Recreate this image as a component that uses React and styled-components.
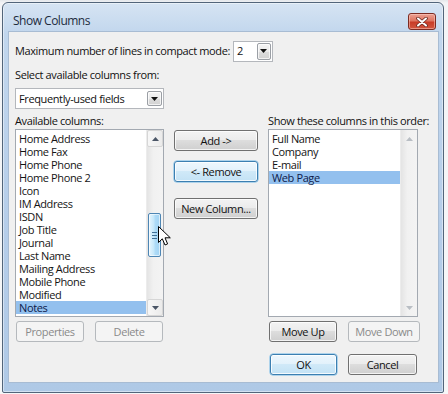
import React from "react";
import styled, { createGlobalStyle, css } from "styled-components";

const GlobalStyle = createGlobalStyle`
  html, body { margin: 0; padding: 0; background: #eef0f3; }
  body {
    font-family: "Open Sans", "Noto Sans", sans-serif;
    font-size: 11px;
    letter-spacing: -0.38px;
    color: #111;
  }
  * { box-sizing: border-box; }
`;

const Page = styled.div`
  position: relative;
  width: 448px;
  height: 394px;
  padding: 2px 0 0 2px;
  overflow: hidden;
  background: linear-gradient(#e4e7eb 0, #f3f4f6 3px, #f6f7f8 100%);
`;

const Window = styled.div`
  width: 442px;
  height: 391px;
  border: 1px solid #52657a;
  border-radius: 6px 6px 2px 2px;
  background: linear-gradient(#d6e4f3 0%, #c1d6ed 8%, #b5cde9 60%, #afc9e6 100%);
  box-shadow: inset 0 0 0 1px rgba(255, 255, 255, 0.45);
  display: flex;
  flex-direction: column;
  padding: 0 5px 10px 6px;
`;

const TitleBar = styled.div`
  height: 29px;
  display: flex;
  align-items: flex-start;
  justify-content: space-between;
  padding: 10px 2px 0 4px;
`;

const Title = styled.div`
  line-height: 16px;
  font-size: 12px;
  letter-spacing: -0.5px;
  color: #1d2b3d;
`;

const CloseButton = styled.div`
  width: 28px;
  height: 17px;
  border: 1px solid #7c2b22;
  border-radius: 3px;
  background: linear-gradient(#eca193 0%, #de7561 45%, #c83c28 55%, #d2563f 100%);
  box-shadow: inset 0 0 0 1px rgba(255, 210, 200, 0.5);
  display: flex;
  align-items: center;
  justify-content: center;
`;

const Client = styled.div`
  flex: 1;
  background: #f0f0f0;
  box-shadow: 0 0 0 1px #a8bcd3;
  padding: 8px 0 7px 6px;
  display: flex;
  flex-direction: column;
`;

const Row = styled.div`
  display: flex;
  align-items: center;
  gap: 3px;
  height: 22px;
`;

const Label = styled.div`
  line-height: 16px;
  white-space: nowrap;
  margin-top: ${(p) => p.$mt || 0}px;
`;

const Combo = styled.div`
  width: ${(p) => p.$w}px;
  height: 21px;
  margin-top: ${(p) => p.$mt || 0}px;
  background: #fff;
  border: 1px solid #b4b7bc;
  display: flex;
  align-items: center;
  padding: 1px 1px 1px 3px;
`;

const ComboText = styled.div`
  flex: 1;
  line-height: 16px;
  white-space: nowrap;
`;

const DropButton = styled.div`
  width: ${(p) => p.$w}px;
  height: ${(p) => p.$h}px;
  border: 1px solid #9b9fa5;
  border-radius: 2px;
  background: linear-gradient(#f4f4f4 0%, #eaeaea 50%, #dcdcdc 51%, #d2d2d2 100%);
  box-shadow: inset 0 0 0 1px rgba(255, 255, 255, 0.7);
  display: flex;
  align-items: center;
  justify-content: center;
`;

const MainGrid = styled.div`
  margin-top: 4px;
  display: grid;
  grid-template-columns: 149px 84px 153px;
  grid-template-rows: 16px 188px auto auto;
  column-gap: 10px;
  grid-template-areas:
    "availLabel . showLabel"
    "availList mid showList"
    "leftBtns . rightBtns"
    ". . okRow";
`;

const Area = styled.div`
  grid-area: ${(p) => p.$area};
`;

const ListBox = styled.div`
  grid-area: ${(p) => p.$area};
  width: ${(p) => p.$w}px;
  height: 188px;
  border: 1px solid #a3a9b1;
  background: #fff;
  display: flex;
`;

const Items = styled.div`
  flex: 1;
  padding-top: 2px;
  overflow: hidden;
`;

const Item = styled.div`
  height: 13px;
  line-height: 13px;
  padding-left: 3px;
  white-space: nowrap;
  color: #141414;
  ${(p) =>
    p.$selected &&
    css`
      background: #93c0ee;
      color: #0d1a4a;
    `}
`;

const ScrollBar = styled.div`
  width: 17px;
  display: flex;
  flex-direction: column;
  background: linear-gradient(90deg, #e4e4e4 0%, #f1f1f1 40%, #f3f3f3 100%);
  border-left: 1px solid #ececec;
`;

const ScrollArrow = styled.div`
  width: 16px;
  height: 17px;
  display: flex;
  align-items: center;
  justify-content: center;
  ${(p) =>
    p.$boxed &&
    css`
      border: 1px solid #d6d6d6;
      border-radius: 2px;
      background: linear-gradient(90deg, #f7f7f7, #ebebeb);
    `}
`;

const Track = styled.div`
  flex: 1;
`;

const Thumb = styled.div`
  width: 13px;
  margin-left: 1px;
  border: 1px solid #4e86b4;
  border-radius: 2px;
  background: linear-gradient(90deg, #e6f5fd 0%, #c5e7fa 45%, #aedbf7 55%, #a2d3f3 100%);
  box-shadow: inset 0 0 0 1px rgba(255, 255, 255, 0.6);
  display: flex;
  align-items: center;
  justify-content: center;
`;

const Grip = styled.div`
  width: 5px;
  height: 7px;
  background: repeating-linear-gradient(#3f6f96 0 1px, transparent 1px 3px);
`;

const Button = styled.div`
  height: 21px;
  border-radius: 3px;
  line-height: 17px;
  display: flex;
  align-items: center;
  justify-content: center;
  white-space: nowrap;
  width: ${(p) => p.$w}px;
  margin-left: ${(p) => p.$ml || 0}px;
  margin-top: ${(p) => p.$mt || 0}px;
  color: #111;
  border: 1px solid #707070;
  background: linear-gradient(#f3f3f3 0%, #ebebeb 49%, #dddddd 50%, #cfcfcf 100%);
  box-shadow: inset 0 0 0 1px rgba(255, 255, 255, 0.75);
  ${(p) =>
    p.$focused &&
    css`
      border-color: #3c7fb1;
      background: linear-gradient(#eef7fd 0%, #e2f1fb 49%, #d0e9f8 50%, #c3e2f5 100%);
      box-shadow: inset 0 0 0 1px rgba(255, 255, 255, 0.8), 0 0 0 0.5px #6cb6e6;
    `}
  ${(p) =>
    p.$disabled &&
    css`
      color: #8a8a8a;
      border-color: #b5b9bd;
      background: #f4f4f4;
      box-shadow: none;
    `}
`;

const MidColumn = styled.div`
  grid-area: mid;
  display: flex;
  flex-direction: column;
  padding-top: 1px;
`;

const ButtonRow = styled.div`
  grid-area: ${(p) => p.$area};
  display: flex;
  gap: 11px;
  margin-top: ${(p) => p.$mt}px;
`;

const Cursor = styled.svg`
  position: absolute;
  left: 158px;
  top: 226px;
  width: 14px;
  height: 21px;
  overflow: visible;
`;

const Triangle = ({ down = true, color = "#111", w = 7, h = 4 }) => (
  <svg width={w} height={h} viewBox={`0 0 ${w} ${h}`}>
    <polygon
      points={down ? `0,0 ${w},0 ${w / 2},${h}` : `0,${h} ${w},${h} ${w / 2},0`}
      fill={color}
    />
  </svg>
);

function List({ area, width, items, selected, thumbTop, thumbHeight, disabled }) {
  const glyph = disabled ? "#b9bec4" : "#4a5566";
  return (
    <ListBox $area={area} $w={width}>
      <Items>
        {items.map((t) => (
          <Item key={t} $selected={t === selected}>
            {t}
          </Item>
        ))}
      </Items>
      <ScrollBar>
        <ScrollArrow $boxed={!disabled}>
          <Triangle down={false} color={glyph} w={7} h={4} />
        </ScrollArrow>
        <Track>
          {!disabled && (
            <Thumb style={{ marginTop: thumbTop, height: thumbHeight }}>
              <Grip />
            </Thumb>
          )}
        </Track>
        <ScrollArrow $boxed={!disabled}>
          <Triangle down color={glyph} w={7} h={4} />
        </ScrollArrow>
      </ScrollBar>
    </ListBox>
  );
}

const available = [
  "Home Address",
  "Home Fax",
  "Home Phone",
  "Home Phone 2",
  "Icon",
  "IM Address",
  "ISDN",
  "Job Title",
  "Journal",
  "Last Name",
  "Mailing Address",
  "Mobile Phone",
  "Modified",
  "Notes",
];

const shown = ["Full Name", "Company", "E-mail", "Web Page"];

export default function App() {
  return (
    <>
      <GlobalStyle />
      <Page>
        <Window>
          <TitleBar>
            <Title>Show Columns</Title>
            <CloseButton>
              <svg width="12" height="10" viewBox="0 0 12 10">
                <path d="M2 1.5 L10 8.5 M10 1.5 L2 8.5" stroke="#6b2a22" strokeWidth="3.6" strokeLinecap="round" />
                <path d="M2 1.5 L10 8.5 M10 1.5 L2 8.5" stroke="#ffffff" strokeWidth="2" strokeLinecap="round" />
              </svg>
            </CloseButton>
          </TitleBar>
          <Client>
            <Row>
              <Label>Maximum number of lines in compact mode:</Label>
              <Combo $w={40}>
                <ComboText>2</ComboText>
                <DropButton $w={14} $h={17}>
                  <Triangle w={7} h={4} />
                </DropButton>
              </Combo>
            </Row>
            <Label $mt={5}>Select available columns from:</Label>
            <Combo $w={149} $mt={5}>
              <ComboText>Frequently-used fields</ComboText>
              <DropButton $w={15} $h={15}>
                <Triangle w={7} h={4} />
              </DropButton>
            </Combo>
            <MainGrid>
              <Area $area="availLabel">
                <Label>Available columns:</Label>
              </Area>
              <Area $area="showLabel">
                <Label>Show these columns in this order:</Label>
              </Area>
              <List
                area="availList"
                width={149}
                items={available}
                selected="Notes"
                thumbTop={66}
                thumbHeight={44}
              />
              <MidColumn>
                <Button $w={84}>Add -&gt;</Button>
                <Button $w={84} $mt={10} $focused>
                  &lt;- Remove
                </Button>
                <Button $w={84} $mt={16}>
                  New Column...
                </Button>
              </MidColumn>
              <List area="showList" width={150} items={shown} selected="Web Page" disabled />
              <ButtonRow $area="leftBtns" $mt={4}>
                <Button $w={68} $ml={1} $disabled>
                  Properties
                </Button>
                <Button $w={68} $disabled>
                  Delete
                </Button>
              </ButtonRow>
              <ButtonRow $area="rightBtns" $mt={4}>
                <Button $w={68} $ml={1}>
                  Move Up
                </Button>
                <Button $w={72} $disabled>
                  Move Down
                </Button>
              </ButtonRow>
              <ButtonRow $area="okRow" $mt={12}>
                <Button $w={67} $ml={2} $focused>
                  OK
                </Button>
                <Button $w={69}>Cancel</Button>
              </ButtonRow>
            </MainGrid>
          </Client>
        </Window>
        <Cursor viewBox="0 0 14 21">
          <path
            d="M0.5 0.5 L0.5 16.5 L4.3 12.8 L7 19 L9.6 17.9 L7 11.8 L12.3 11.8 Z"
            fill="#fff"
            stroke="#000"
            strokeWidth="1"
            strokeLinejoin="round"
          />
        </Cursor>
      </Page>
    </>
  );
}
